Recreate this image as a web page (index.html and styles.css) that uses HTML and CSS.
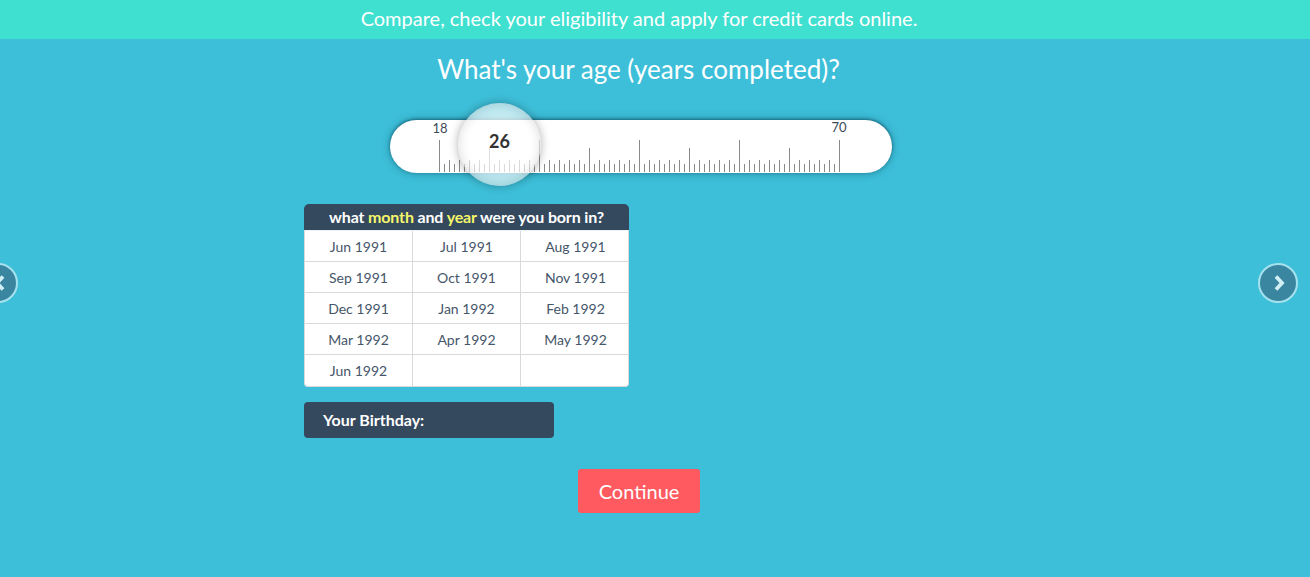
FILE: index.html
```html
<!DOCTYPE html>
<html>
<head>
<meta charset="utf-8">
<link rel="stylesheet" href="styles.css">
</head>
<body>
<div class="banner">Compare, check your eligibility and apply for credit cards online.</div>
<main class="page">
  <h1 class="title">What's your age (years completed)?</h1>
  <div class="content">
    <div class="ruler">
      <span class="lbl lbl-min">18</span>
      <span class="lbl lbl-max">70</span>
      <div class="ticks"></div>
      <div class="knob">26</div>
    </div>
    <div class="panel">
      <div class="panel-head">what <span class="hl">month</span> and <span class="hl">year</span> were you born in?</div>
      <div class="grid">
        <div class="cell">Jun 1991</div><div class="cell">Jul 1991</div><div class="cell">Aug 1991</div>
        <div class="cell">Sep 1991</div><div class="cell">Oct 1991</div><div class="cell">Nov 1991</div>
        <div class="cell">Dec 1991</div><div class="cell">Jan 1992</div><div class="cell">Feb 1992</div>
        <div class="cell">Mar 1992</div><div class="cell">Apr 1992</div><div class="cell">May 1992</div>
        <div class="cell">Jun 1992</div><div class="cell"></div><div class="cell"></div>
      </div>
    </div>
    <div class="birthday">Your Birthday:</div>
    <div class="actions"><button class="btn">Continue</button></div>
  </div>
  <a class="nav nav-prev"><svg width="16" height="16" viewBox="0 0 16 16"><polyline points="11,1.5 5,8 11,14.5" fill="none" stroke="#d2eff6" stroke-width="3.8"/></svg></a>
  <a class="nav nav-next"><svg width="16" height="16" viewBox="0 0 16 16"><polyline points="5,1.5 11,8 5,14.5" fill="none" stroke="#d2eff6" stroke-width="3.8"/></svg></a>
</main>
</body>
</html>
```
FILE: styles.css
```css
* { box-sizing: border-box; }
html, body { margin: 0; padding: 0; }
body {
  background: #3dbfd9;
  font-family: Lato, "Open Sans", Arial, sans-serif;
  color: #fff;
  height: 577px;
  overflow: hidden;
}
.banner {
  background: #40e0d0;
  height: 39px;
  line-height: 37px;
  text-align: center;
  font-size: 20px;
  color: #fff;
  padding-right: 32px;
}
.page { position: relative; height: 538px; }
.title {
  margin: 0;
  padding-top: 15px;
  padding-right: 33px;
  text-align: center;
  font-size: 26px;
  font-weight: 400;
  line-height: 30px;
}
.content {
  width: 670px;
  margin-left: calc(50% - 351px);
  padding-top: 36px;
}
.ruler {
  position: relative;
  margin-left: 86px;
  width: 502px;
  height: 53px;
  background: #fff;
  border-radius: 27px;
  box-shadow: 0 -1px 3px rgba(0,60,80,.55), 0 0 8px rgba(0,60,80,.45);
}
.lbl {
  position: absolute;
  top: 0;
  font-size: 13px;
  color: #3c4a5a;
  width: 30px;
  text-align: center;
}
.lbl-min { left: 35px; }
.lbl-max { left: 434px; top: -1px; }
.ticks {
  position: absolute;
  left: 49px;
  bottom: 1px;
  width: 401px;
  height: 32px;
  background:
    repeating-linear-gradient(to right, #8a8a8a 0 1px, transparent 1px 100px) left bottom / 100% 32px no-repeat,
    repeating-linear-gradient(to right, transparent 0 50px, #8a8a8a 50px 51px, transparent 51px 100px) left bottom / 100% 24px no-repeat,
    repeating-linear-gradient(to right, #8a8a8a 0 1px, transparent 1px 10px) left bottom / 100% 12px no-repeat,
    repeating-linear-gradient(to right, transparent 0 5px, #8a8a8a 5px 6px, transparent 6px 10px) left bottom / 100% 8px no-repeat;
}
.knob {
  position: absolute;
  left: 68px;
  top: -17px;
  width: 83px;
  height: 83px;
  border-radius: 50%;
  background: radial-gradient(circle at 50% 45%, rgba(255,255,255,.8) 0, rgba(255,255,255,.62) 70%, rgba(230,248,252,.55) 100%);
  box-shadow: 0 0 10px rgba(0,0,0,.32), inset 0 0 12px rgba(0,0,0,.14);
  color: #333;
  font-size: 18px;
  font-weight: 700;
  text-align: center;
  line-height: 77px;
}
.panel {
  width: 325px;
  margin-top: 31px;
}
.panel-head {
  background: #34495e;
  height: 26px;
  line-height: 26px;
  border-radius: 5px 5px 0 0;
  text-align: center;
  font-size: 16px;
  font-weight: 700;
  letter-spacing: -0.15px;
  color: #fff;
}
.hl { color: #f5f56b; }
.grid {
  display: grid;
  grid-template-columns: 108px 108px 109px;
  background: #fff;
  border: 1px solid #d9d9d9;
  border-top: 1px solid #eef2f4;
  border-radius: 0 0 4px 4px;
  overflow: hidden;
}
.cell {
  height: 31px;
  line-height: 32px;
  text-align: center;
  font-size: 14px;
  color: #46566a;
  border-right: 1px solid #d9d9d9;
  border-bottom: 1px solid #d9d9d9;
}
.cell:nth-child(3n) { border-right: 0; }
.cell:nth-last-child(-n+3) { border-bottom: 0; }
.birthday {
  width: 250px;
  height: 36px;
  margin-top: 15px;
  background: #34495e;
  border-radius: 4px;
  padding-left: 19px;
  line-height: 36px;
  font-size: 16px;
  font-weight: 700;
}
.actions {
  display: flex;
  justify-content: center;
  margin-top: 31px;
  width: 669px;
}
.btn {
  background: #fe5a60;
  border: 0;
  border-radius: 3px;
  color: #fff;
  font-family: inherit;
  font-size: 20px;
  width: 122px;
  height: 44px;
  padding: 0;
  margin-left: 1px;
}
.nav {
  position: absolute;
  top: 224px;
  width: 40px;
  height: 40px;
  border-radius: 50%;
  background: #3a86a0;
  border: 2px solid #a6e2ee;
  display: flex;
  align-items: center;
  justify-content: center;
}
.nav-prev { left: -22px; }
.nav-prev svg { margin-left: 3px; }
.nav-next { left: 1258px; }
.nav-next svg { margin-left: 2px; }
```
